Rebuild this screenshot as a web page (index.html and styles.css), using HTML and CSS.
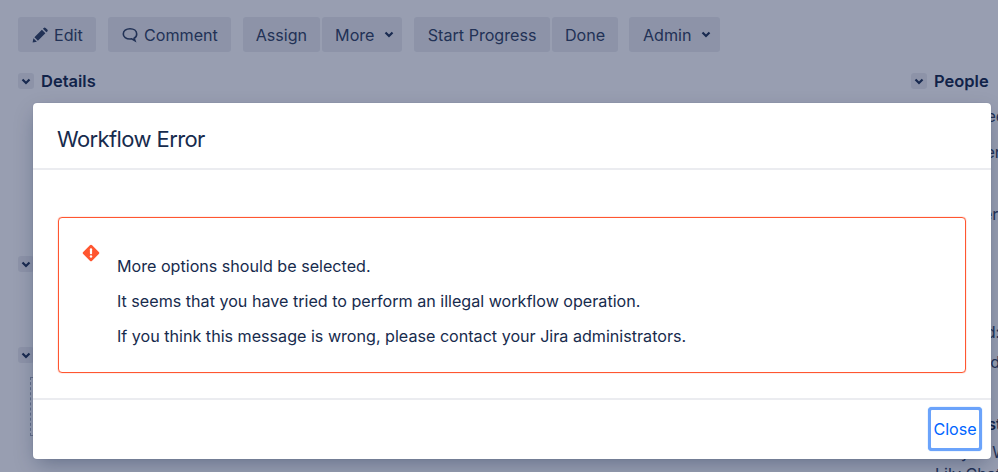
FILE: index.html
```html
<!DOCTYPE html>
<html lang="en">
<head>
<meta charset="utf-8">
<title>Workflow Error</title>
<link rel="stylesheet" href="styles.css">
</head>
<body>
<main class="page">
  <div class="toolbar">
    <div class="group"><button class="btn"><svg class="ico" viewBox="0 0 16 16"><path d="M.6 15.600l.8-4.300 3.500 3.500zM2.400 10.300l7.500-7.500 3.500 3.500-7.500 7.500zM10.900 1.800l.9-.9a1.300 1.300 0 0 1 1.800 0l1.700 1.700a1.300 1.300 0 0 1 0 1.800l-.9.9z"/></svg>Edit</button></div>
    <div class="group"><button class="btn"><svg class="ico stroke" viewBox="0 0 16 16"><path d="M8 1.800c3.900 0 6.700 2.100 6.700 5.100 0 2.100-1.100 3.600-2.600 4.400l.9 2.500-3.400-1.900c-.5.100-1 .100-1.600.100-3.900 0-6.700-2-6.700-5.100C1.300 3.900 4.100 1.800 8 1.800z"/></svg>Comment</button></div>
    <div class="group"><button class="btn tight">Assign</button><button class="btn menu">More<svg class="chev" viewBox="0 0 10 7"><path d="M1.500 1.500L5 5l3.500-3.500"/></svg></button></div>
    <div class="group"><button class="btn wide">Start Progress</button><button class="btn tight">Done</button></div>
    <div class="group"><button class="btn menu wide-menu">Admin<svg class="chev" viewBox="0 0 10 7"><path d="M1.500 1.500L5 5l3.500-3.500"/></svg></button></div>
  </div>
  <div class="columns">
    <div class="col-main">
      <section class="module details">
        <h2 class="mod-title"><span class="twist"><svg class="chev" viewBox="0 0 10 7"><path d="M1.500 1.500L5 5l3.500-3.500"/></svg></span>Details</h2>
      </section>
      <section class="module desc"><span class="twist"><svg class="chev" viewBox="0 0 10 7"><path d="M1.500 1.500L5 5l3.500-3.500"/></svg></span></section>
      <section class="module attach"><span class="twist"><svg class="chev" viewBox="0 0 10 7"><path d="M1.500 1.500L5 5l3.500-3.500"/></svg></span><div class="dropzone"></div></section>
    </div>
    <aside class="col-side">
      <h2 class="mod-title"><span class="twist"><svg class="chev" viewBox="0 0 10 7"><path d="M1.500 1.500L5 5l3.500-3.500"/></svg></span>People</h2>
      <div class="rows">
        <p class="row r1">Assignee:</p>
        <p class="row r2">Reporter:</p>
        <p class="row r3">Watcher:</p>
        <p class="row r4">Created:</p>
        <p class="row r5">Updated:</p>
        <p class="row r6">Request</p>
        <p class="row r7">Only in Wiki</p>
        <p class="row r8">Lily Chat</p>
      </div>
    </aside>
  </div>
</main>
<div class="blanket"></div>
<div class="dialog" role="dialog">
  <header class="dlg-head"><h1>Workflow Error</h1></header>
  <div class="dlg-body">
    <div class="error-box">
      <svg class="err-ico" viewBox="0 0 18 18"><path class="diamond" d="M9 .7a1.600 1.600 0 0 1 1.100.5l6.700 6.700a1.600 1.600 0 0 1 0 2.200l-6.700 6.700a1.600 1.600 0 0 1-2.200 0L1.200 10.100a1.600 1.600 0 0 1 0-2.200l6.700-6.700A1.600 1.600 0 0 1 9 .7z"/><rect class="mark" x="7.900" y="4.300" width="2.200" height="5.900" rx="1"/><circle class="mark" cx="9" cy="12.500" r="1.200"/></svg>
      <div class="err-text">
        <p>More options should be selected.</p>
        <p>It seems that you have tried to perform an illegal workflow operation.</p>
        <p>If you think this message is wrong, please contact your Jira administrators.</p>
      </div>
    </div>
  </div>
  <footer class="dlg-foot"><button class="close">Close</button></footer>
</div>
</body>
</html>
```
FILE: styles.css
```css
* { box-sizing: border-box; }
html, body { margin: 0; height: 100%; }
body {
  position: relative;
  width: 998px;
  height: 472px;
  overflow: hidden;
  background: #fff;
  color: #172b4d;
  font-family: Inter, "Noto Sans", "Liberation Sans", sans-serif;
  font-size: 16.130px;
}
.page { padding: 17px 18px 0; height: 472px; }
.toolbar { display: flex; gap: 11.800px; }
.group { display: flex; gap: 2px; }
.btn {
  display: flex;
  align-items: center;
  height: 35px;
  padding: 0 13.500px;
  border: 0;
  border-radius: 3px;
  background: rgba(9, 30, 66, .08);
  color: #344563;
  font: inherit;
}
.btn.menu { padding-right: 8px; }
.btn.tight { padding: 0 12.500px; }
.btn.wide { padding: 0 14px; }
.btn.wide-menu { padding-right: 9px; }
.ico { width: 16px; height: 16px; margin-right: 6.500px; fill: #344563; }
.ico.stroke { fill: none; stroke: #344563; stroke-width: 1.600; }
.chev { width: 10px; height: 7px; fill: none; stroke: #253858; stroke-width: 2.200; }
.btn .chev { margin-left: 9.500px; }
.columns { display: flex; justify-content: space-between; margin-top: 19px; }
.col-main { width: 300px; }
.col-side { width: 69px; }
.mod-title { display: flex; align-items: center; height: 20px; margin: 0; font-size: 16.500px; font-weight: 600; color: #172b4d; white-space: nowrap; }
.twist { display: flex; align-items: center; justify-content: center; flex: none; width: 16px; height: 16px; margin-right: 7px; border-radius: 3px; background: rgba(9, 30, 66, .08); }
.details { height: 185px; }
.desc { height: 91px; }
.dropzone { width: 4px; height: 59px; margin: 14px 0 0 12px; border: 1px dashed #a5adba; border-right: 0; }
.rows { margin-left: 24px; }
.row { margin: 0; height: 24px; line-height: 24px; white-space: nowrap; color: #344563; }
.r1 { margin-top: 13px; }
.r2 { margin-top: 12px; }
.r3 { margin-top: 38px; }
.r4 { margin-top: 94px; }
.r5 { margin-top: 6px; }
.r6 { margin: 38px 0 0 3px; font-weight: 600; color: #172b4d; }
.r7 { margin-top: 4px; }
.r8 { margin-top: -2px; }
.blanket { position: absolute; inset: 0; background: rgba(10, 24, 69, .42); }
.dialog {
  position: absolute;
  left: 33px;
  top: 103px;
  width: 958px;
  height: 356px;
  display: flex;
  flex-direction: column;
  background: #fff;
  border-radius: 4px;
  box-shadow: 0 8px 20px -4px rgba(9, 30, 66, .35), 0 0 1px rgba(9, 30, 66, .31);
}
.dlg-head { flex: none; height: 67px; padding: 7px 24px 0; display: flex; align-items: center; border-bottom: 2px solid #ebecf0; }
.dlg-head h1 { margin: 0; font-size: 22px; font-weight: 400; letter-spacing: -.6px; color: #172b4d; }
.dlg-body { flex: none; height: 230px; padding: 47px 25px 0; border-bottom: 2px solid #ebecf0; }
.error-box { display: flex; height: 156px; padding: 26px 0 0 23px; border: 1px solid #ff5630; border-radius: 4px; box-shadow: 0 0 1px #ff5630; }
.err-ico { flex: none; width: 18px; height: 18px; margin-right: 17px; }
.diamond { fill: #ff5630; }
.mark { fill: #fff; }
.err-text { padding-top: 10px; color: #172b4d; line-height: 24px; }
.err-text p { margin: 0 0 11px; }
.dlg-foot { flex: 1; display: flex; justify-content: flex-end; align-items: flex-start; padding: 7px 9px 0 0; }
.close { width: 54px; height: 44px; padding: 0; border: 3px solid #6ba3fb; border-radius: 4px; background: #fff; color: #0065ff; font: inherit; box-shadow: 0 0 1px #4c9aff; }
```
